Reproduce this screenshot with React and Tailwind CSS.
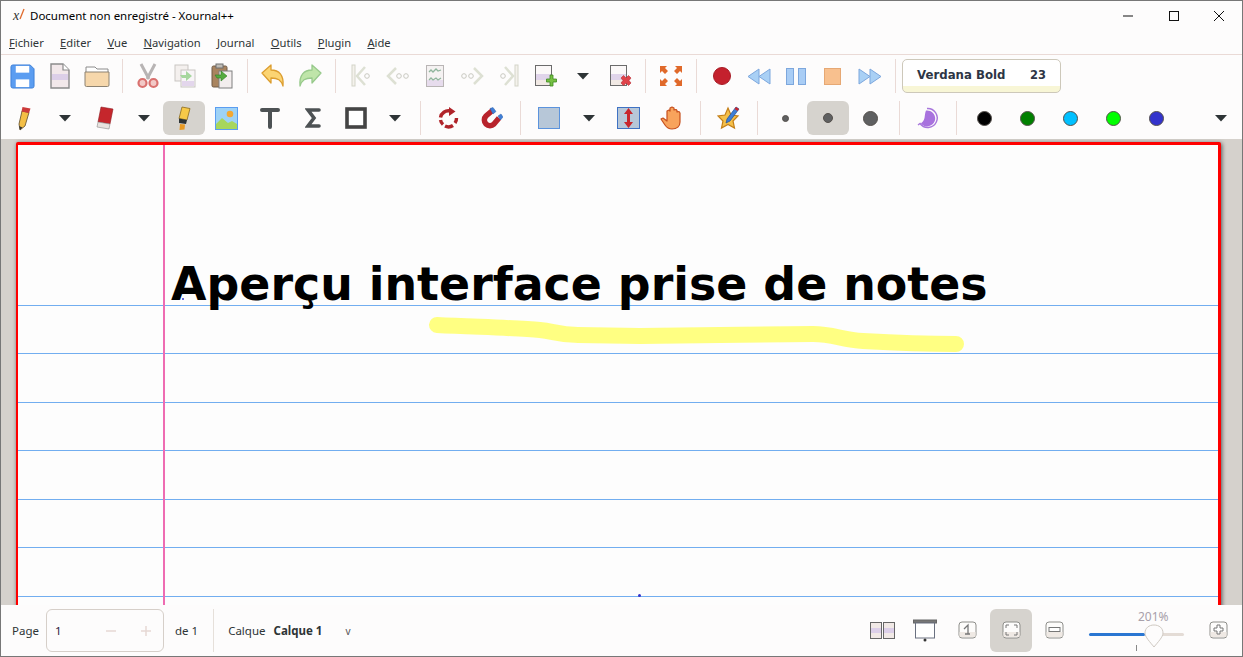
import React from 'react';

const Arrow = () => (
  <svg width="14" height="8" viewBox="0 0 14 8"><path d="M1 1h12L7 7.5z" fill="#2e3436" /></svg>
);

const Save = () => (
  <svg width="25" height="25" viewBox="0 0 26 26">
    <path d="M3 1h18l4 4v18a2 2 0 0 1-2 2H3a2 2 0 0 1-2-2V3a2 2 0 0 1 2-2z" fill="#5b9df1" stroke="#3d7fd6" />
    <rect x="6" y="2" width="14" height="7" fill="#fff" />
    <rect x="6" y="16" width="14" height="8" fill="#fff" />
  </svg>
);

const NewDoc = () => (
  <svg width="20" height="26" viewBox="0 0 20 26">
    <path d="M1 1h12l6 6v18H1z" fill="#f2e8ea" stroke="#8a8a8a" strokeWidth="1.4" />
    <rect x="2" y="11" width="16" height="6" fill="#dccfe8" />
    <path d="M13 1v6h6" fill="#fff" stroke="#8a8a8a" strokeWidth="1.2" />
  </svg>
);

const Folder = () => (
  <svg width="26" height="24" viewBox="0 0 26 24">
    <path d="M2 5V3h9l2 2h11v4H2z" fill="#fff" stroke="#8c8c8c" />
    <path d="M1 8h24v13a1.500 1.500 0 0 1-1.500 1.500h-21A1.500 1.500 0 0 1 1 21z" fill="#f6d7ab" stroke="#8c8272" />
  </svg>
);

const Scissors = () => (
  <svg width="22" height="26" viewBox="0 0 22 26" fill="none">
    <path d="M4 1l8 15M18 1l-8 15" stroke="#b8b4b4" strokeWidth="3" />
    <circle cx="5.500" cy="20" r="4" stroke="#d9716f" strokeWidth="2.200" fill="#f2c9c7" />
    <circle cx="16.500" cy="20" r="4" stroke="#d9716f" strokeWidth="2.200" fill="#f2c9c7" />
  </svg>
);

const Copy = () => (
  <svg width="22" height="24" viewBox="0 0 22 24">
    <rect x="1" y="1" width="13" height="16" fill="#f4f0ee" stroke="#c9c5c2" />
    <rect x="7" y="6" width="14" height="17" fill="#f8f5f7" stroke="#c9c5c2" />
    <rect x="8" y="17" width="12" height="5" fill="#e3d6ec" />
    <path d="M6 11h6V7l6 5-6 5v-3H8z" fill="#a7d79e" />
  </svg>
);

const Paste = () => (
  <svg width="22" height="26" viewBox="0 0 22 26">
    <rect x="1" y="3" width="15" height="21" rx="1.500" fill="#a9845f" stroke="#6f5a46" />
    <rect x="5" y="1" width="7" height="4" fill="#bfbcb6" stroke="#6f6f6f" />
    <rect x="8" y="8" width="13" height="17" fill="#f3eeee" stroke="#7f7f7f" />
    <path d="M4 12h6V8l6 5-6 5v-3H6z" fill="#54ab3f" stroke="#2e7d24" strokeWidth=".6" />
  </svg>
);

const Undo = () => (
  <svg width="24" height="24" viewBox="0 0 24 24">
    <path d="M1 9l9-8v5c8 0 13 5 12 16-2-6-5-8-12-8v5z" fill="#fbd473" stroke="#dc9d2f" strokeWidth="1.300" strokeLinejoin="round" />
  </svg>
);

const Redo = () => (
  <svg width="24" height="24" viewBox="0 0 24 24">
    <path d="M23 9l-9-8v5C6 6 1 11 2 22c2-6 5-8 12-8v5z" fill="#bfe5a9" stroke="#97c98b" strokeWidth="1.300" strokeLinejoin="round" />
  </svg>
);

const NavFirst = () => (
  <svg width="22" height="24" viewBox="0 0 22 24" fill="none">
    <rect x="2" y="1" width="3" height="21" fill="#f4f2ec" stroke="#d4d4c8" />
    <path d="M15 3l-8 9 8 9" stroke="#dde0d3" strokeWidth="2.500" />
    <circle cx="17" cy="12" r="2.300" stroke="#c9c9c1" />
  </svg>
);

const NavPrev = () => (
  <svg width="24" height="20" viewBox="0 0 24 20" fill="none">
    <path d="M10 2l-8 8 8 8" stroke="#dde0d3" strokeWidth="2.500" />
    <circle cx="13" cy="10" r="2.300" stroke="#c9c9c1" />
    <circle cx="20" cy="10" r="2.300" stroke="#c9c9c1" />
  </svg>
);

const NavNext = () => (
  <svg width="24" height="20" viewBox="0 0 24 20" fill="none">
    <path d="M14 2l8 8-8 8" stroke="#dde0d3" strokeWidth="2.500" />
    <circle cx="4" cy="10" r="2.300" stroke="#c9c9c1" />
    <circle cx="11" cy="10" r="2.300" stroke="#c9c9c1" />
  </svg>
);

const NavLast = () => (
  <svg width="22" height="24" viewBox="0 0 22 24" fill="none">
    <rect x="17" y="1" width="3" height="21" fill="#f4f2ec" stroke="#d4d4c8" />
    <path d="M7 3l8 9-8 9" stroke="#dde0d3" strokeWidth="2.500" />
    <circle cx="5" cy="12" r="2.300" stroke="#c9c9c1" />
  </svg>
);

const Goto = () => (
  <svg width="18" height="22" viewBox="0 0 18 22" fill="none">
    <rect x=".500" y=".500" width="17" height="21" fill="#f5f2f2" stroke="#b9b5b5" />
    <rect x="1" y="15" width="16" height="6" fill="#e7dced" />
    <path d="M3 7l2-2 2 2 3-3 2 2 3-1M3 15l2-2 2 2 3-2 2 2 3-2" stroke="#8fb59c" strokeWidth="1.300" />
  </svg>
);

const PageAdd = () => (
  <svg width="22" height="23" viewBox="0 0 22 23">
    <rect x=".500" y=".500" width="16" height="20" fill="#fbf8f8" stroke="#6b6b6b" />
    <rect x="1" y="9" width="15" height="6" fill="#e0d4ea" />
    <rect x="1" y="15" width="15" height="5" fill="#f1e9e4" />
    <path d="M15 10h3v4h3.500v3H18v4h-3v-4h-3.500v-3H15z" fill="#76c043" stroke="#3e8a22" strokeWidth=".8" />
  </svg>
);

const PageDel = () => (
  <svg width="22" height="23" viewBox="0 0 22 23">
    <rect x=".500" y=".500" width="16" height="20" fill="#fbf8f8" stroke="#6b6b6b" />
    <rect x="1" y="9" width="15" height="6" fill="#e0d4ea" />
    <rect x="1" y="15" width="15" height="5" fill="#f1e9e4" />
    <path d="M11 13l2.500-2.500L16 13l2.500-2.500L21 13l-2 2.500 2 2.500-2.500 2.500L16 18l-2.500 2.500L11 18l2-2.500z" fill="#e0434a" stroke="#b82a30" strokeWidth=".6" />
  </svg>
);

const Fullscreen = () => (
  <svg width="22" height="20" viewBox="0 0 22 20" fill="#e0692a">
    <path d="M0 0h7L5 2l3 3-3 3-3-3-2 2zM22 0h-7l2 2-3 3 3 3 3-3 2 2zM0 20h7l-2-2 3-3-3-3-3 3-2-2zM22 20h-7l2-2-3-3 3-3 3 3 2-2z" />
  </svg>
);

const Dot = ({ size, fill, stroke = '#55504c' }) => (
  <span className="rounded-full border" style={{ width: size, height: size, background: fill, borderColor: stroke }} />
);

const Rewind = () => (
  <svg width="24" height="17" viewBox="0 0 24 17"><path d="M12 1L1 8.500 12 16zM23 1L12 8.500 23 16z" fill="#a9d0f5" stroke="#7da7dd" /></svg>
);
const Forward = () => (
  <svg width="24" height="17" viewBox="0 0 24 17"><path d="M1 1l11 7.500L1 16zM12 1l11 7.500L12 16z" fill="#a9d0f5" stroke="#7da7dd" /></svg>
);
const Pause = () => (
  <svg width="20" height="17" viewBox="0 0 20 17" fill="#a9cdf5" stroke="#7da7dd"><rect x=".500" y=".500" width="7" height="16" /><rect x="12.500" y=".500" width="7" height="16" /></svg>
);
const Stop = () => (
  <svg width="17" height="17" viewBox="0 0 17 17"><rect x=".500" y=".500" width="16" height="16" fill="#f8c08e" stroke="#e6a874" /></svg>
);

const Pencil = () => (
  <svg width="16" height="25" viewBox="0 0 16 25">
    <path d="M5 5l7 1.500L8 20l-5 4-1-6z" fill="#f4bf46" stroke="#5c4a2a" strokeWidth=".8" />
    <path d="M5.500 1l8 1.500L12 7 4.500 5.500z" fill="#cc3a3a" />
    <path d="M3 24l-1-4 3.500 1.500z" fill="#333" />
  </svg>
);

const Eraser = () => (
  <svg width="18" height="24" viewBox="0 0 18 24">
    <path d="M5 1l12 2-3 15-12-2z" fill="#c5262c" stroke="#8f1d22" strokeWidth=".6" />
    <path d="M2 16l12 2-1 5-12-2z" fill="#e8e3df" stroke="#8c8c8c" strokeWidth=".6" />
  </svg>
);

const Highlighter = () => (
  <svg width="16" height="26" viewBox="0 0 16 26">
    <path d="M6 2l8 1.500L11 15l-8-1.500z" fill="#f7c948" stroke="#8a6a1d" strokeWidth=".8" />
    <path d="M3 13.500l8 1.500-1 4-7-1z" fill="#2e3436" />
    <path d="M4 19l5 .500-.500 5L3.500 25z" fill="#e89a24" />
  </svg>
);

const ImageIcon = () => (
  <svg width="23" height="23" viewBox="0 0 23 23">
    <rect x=".500" y=".500" width="22" height="22" fill="#9ed2f6" stroke="#5b9df1" />
    <circle cx="15" cy="7" r="3.300" fill="#f3a833" />
    <path d="M1 17l6-6 6 5 4-2 5 3v5H1z" fill="#a7d65c" />
  </svg>
);

const TextIcon = () => (
  <svg width="20" height="22" viewBox="0 0 20 22" fill="none">
    <path d="M2 3h16M10 3v17" stroke="#4d5254" strokeWidth="4" strokeLinecap="round" />
  </svg>
);

const SigmaIcon = () => (
  <svg width="16" height="22" viewBox="0 0 16 22" fill="none">
    <path d="M14 3H3l6 8-6 8h11" stroke="#4d5254" strokeWidth="3.600" strokeLinecap="round" />
  </svg>
);

const RectIcon = () => (
  <svg width="22" height="22" viewBox="0 0 22 22"><rect x="2" y="2" width="18" height="18" fill="#fff" stroke="#444" strokeWidth="3.600" /></svg>
);

const Rotate = () => (
  <svg width="21" height="22" viewBox="0 0 21 22" fill="none">
    <path d="M2.500 10.500a8 8 0 0 1 9.500-6.500" stroke="#b0242a" strokeWidth="3.400" />
    <path d="M11 0l6.500 4.500L11 9z" fill="#b0242a" />
    <path d="M18.500 11a8 8 0 0 1-1.500 5" stroke="#b0242a" strokeWidth="3.400" />
    <path d="M15 18.500a8 8 0 0 1-8 .500" stroke="#b0242a" strokeWidth="3.400" />
    <path d="M5 17.500a8 8 0 0 1-2.500-4.500" stroke="#b0242a" strokeWidth="3.400" />
  </svg>
);

const Magnet = () => (
  <svg width="22" height="22" viewBox="0 0 22 22" fill="none">
    <path d="M12 3L5 9a5 5 0 0 0 8 8l5-6" stroke="#b8232c" strokeWidth="5.500" />
    <path d="M9 1.500l3-1 3 4-3 2.500zM17 9l3-2 2 3-2.500 3z" fill="#3f7fd6" stroke="#2f62ae" strokeWidth=".5" />
  </svg>
);

const PageBg = () => (
  <svg width="22" height="22" viewBox="0 0 22 22"><rect x=".500" y=".500" width="21" height="21" fill="#b7c7d8" stroke="#5b93dd" /></svg>
);

const VSpace = () => (
  <svg width="23" height="22" viewBox="0 0 23 22">
    <rect x=".500" y=".500" width="22" height="21" fill="#b7c7d8" stroke="#3f72c4" />
    <path d="M11.500 1L16 7h-3v8h3l-4.500 6L7 15h3V7H7z" fill="#c8262c" />
  </svg>
);

const Hand = () => (
  <svg width="24" height="25" viewBox="0 0 24 25">
    <path d="M1 13l2-1 4 3V5l2-1 1 1V2l2-1 2 1v2l2-.500 1 1V6l2-.500 1 1.500v9c0 4-3 7-8 7-3 0-5-1-7-4z" fill="#f8a35c" stroke="#c64f1d" strokeWidth="1.200" strokeLinejoin="round" />
  </svg>
);

const StarPen = () => (
  <svg width="24" height="24" viewBox="0 0 24 24">
    <path d="M11 2l3 7 7 1-5 5 1.500 7L11 18.500 4.500 22 6 15 1 10l7-1z" fill="#f5c04a" stroke="#c47f18" strokeWidth="1.200" />
    <path d="M19 1l3 2-9 12-4 2 1-4z" fill="#3f7fd6" stroke="#1f4f9a" strokeWidth=".7" />
    <path d="M19 1l3 2-1.500 2-3-2z" fill="#c8262c" />
  </svg>
);

const Crescent = () => (
  <svg width="22" height="22" viewBox="0 0 22 22" fill="none">
    <path d="M10 1.500A9.500 9.500 0 1 1 3 16.500L1 18" stroke="#a877dc" strokeWidth="1.400" />
    <path d="M9 3.500A8 8 0 1 1 4 16.500L2 17.500C5 16 7 14 7.500 11 8 8 8 6 9 3.500z" fill="#a872de" />
  </svg>
);

const Logo = () => (
  <span className="w-[18px] flex items-center font-['Liberation_Serif',serif] italic text-[14px] leading-none text-[#333]">
    <span className="ml-[1px]">x</span>
    <svg width="6" height="12" viewBox="0 0 6 12" fill="none" className="-mt-[3px]"><path d="M1 11l4-10" stroke="#e0692a" strokeWidth="1.300" /></svg>
  </span>
);

const Tool = ({ children, className = 'w-[37px]', active }) => (
  <div className={`${className} h-[34px] shrink-0 flex items-center justify-center rounded-md ${active ? 'bg-[#d6d3ce]' : ''}`}>
    {children}
  </div>
);

const Sep = ({ className = 'w-[14px]' }) => (
  <div className={`${className} h-[34px] shrink-0 flex justify-center`}>
    <div className="w-px h-full bg-[#eadad6]" />
  </div>
);

const ZoomBtn = ({ children }) => (
  <svg width="19" height="19" viewBox="0 0 19 19" fill="none">
    <rect x="1" y="1" width="17" height="16" rx="3" fill="#fdfcfb" stroke="#8e8e8a" />
    <rect x="1.500" y="11" width="16" height="5" fill="#efe9e4" />
    {children}
  </svg>
);

const menus = [
  ['F', 'ichier'],
  ['E', 'diter'],
  ['V', 'ue'],
  ['N', 'avigation'],
  ['J', 'ournal'],
  ['O', 'utils'],
  ['P', 'lugin'],
  ['A', 'ide'],
];

const ruleHeights = ['h-[161px]', 'h-[48px]', 'h-[49px]', 'h-[48px]', 'h-[49px]', 'h-[48px]', 'h-[49px]'];

export default function App() {
  return (
    <div className="w-[1243px] h-[657px] flex flex-col overflow-hidden border border-[#777] bg-[#fdfcfc] text-[#2e3436] font-['Noto_Sans',sans-serif]">
      <div className="h-[31px] shrink-0 flex items-center pl-[11px] pb-[2px] text-[11.500px] text-black">
        <Logo />
        <span>Document non enregistré - Xournal++</span>
        <div className="ml-auto flex items-center">
          <svg width="12" height="12" viewBox="0 0 12 12" className="mr-[34px]"><path d="M1 6h10" stroke="#111" /></svg>
          <svg width="12" height="12" viewBox="0 0 12 12" className="mr-[33px]"><rect x="1.500" y="1.500" width="9" height="9" fill="none" stroke="#111" /></svg>
          <svg width="12" height="12" viewBox="0 0 12 12" className="mr-[17px]"><path d="M1 1l10 10M11 1L1 11" stroke="#111" /></svg>
        </div>
      </div>

      <div className="h-[23px] shrink-0 flex items-center gap-[16.300px] pl-[8px] pt-[1px] text-[11.200px] border-b border-[#eadad6]">
        {menus.map(([k, rest]) => (
          <span key={k}><u>{k}</u>{rest}</span>
        ))}
      </div>

      <div className="h-[42px] shrink-0 flex items-center pl-[3px]">
        <Tool><Save /></Tool>
        <Tool><NewDoc /></Tool>
        <Tool><Folder /></Tool>
        <Sep />
        <Tool><Scissors /></Tool>
        <Tool><Copy /></Tool>
        <Tool><Paste /></Tool>
        <Sep />
        <Tool><Undo /></Tool>
        <Tool><Redo /></Tool>
        <Sep />
        <Tool><NavFirst /></Tool>
        <Tool><NavPrev /></Tool>
        <Tool><Goto /></Tool>
        <Tool><NavNext /></Tool>
        <Tool><NavLast /></Tool>
        <Tool><PageAdd /></Tool>
        <Tool><Arrow /></Tool>
        <Tool className="w-[37px] ml-px"><PageDel /></Tool>
        <Sep className="w-[13px]" />
        <Tool><Fullscreen /></Tool>
        <Sep />
        <Tool><Dot size={18} fill="#c4212d" stroke="#a81c26" /></Tool>
        <Tool><Rewind /></Tool>
        <Tool><Pause /></Tool>
        <Tool><Stop /></Tool>
        <Tool><Forward /></Tool>
        <Sep />
        <div className="w-[159px] h-[34px] shrink-0 rounded-[5px] border border-[#cdc8ba] bg-[linear-gradient(#fff_26px,#f8f6d6_26px)] flex items-center pl-[14px] pr-[14px] justify-between font-['DejaVu_Sans',sans-serif] font-bold text-[#2d3545]">
          <span className="text-[11.750px]">Verdana Bold</span>
          <span className="text-[11.500px]">23</span>
        </div>
      </div>

      <div className="h-[42px] shrink-0 flex items-center pl-[3px]">
        <Tool className="w-[41px]"><Pencil /></Tool>
        <Tool className="w-[40px]"><Arrow /></Tool>
        <Tool className="w-[39px]"><Eraser /></Tool>
        <Tool className="w-[39px]"><Arrow /></Tool>
        <Tool className="w-[42px]" active><Highlighter /></Tool>
        <Tool className="w-[43px]"><ImageIcon /></Tool>
        <Tool className="w-[43px]"><TextIcon /></Tool>
        <Tool className="w-[43px]"><SigmaIcon /></Tool>
        <Tool className="w-[43px]"><RectIcon /></Tool>
        <Tool className="w-[36px]"><Arrow /></Tool>
        <Sep />
        <Tool className="w-[43px]"><Rotate /></Tool>
        <Tool className="w-[43px]"><Magnet /></Tool>
        <Sep />
        <Tool className="w-[43px]"><PageBg /></Tool>
        <Tool className="w-[37px]"><Arrow /></Tool>
        <Tool className="w-[43px]"><VSpace /></Tool>
        <Tool className="w-[43px]"><Hand /></Tool>
        <Sep />
        <Tool className="w-[43px]"><StarPen /></Tool>
        <Sep />
        <Tool className="w-[43px]"><Dot size={7} fill="#5f6061" /></Tool>
        <Tool className="w-[42px]" active><Dot size={10} fill="#5f6061" /></Tool>
        <Tool className="w-[43px]"><Dot size={15} fill="#5f6061" /></Tool>
        <Sep />
        <Tool className="w-[43px]"><Crescent /></Tool>
        <Sep />
        <Tool className="w-[43px]"><Dot size={15} fill="#000000" /></Tool>
        <Tool className="w-[43px]"><Dot size={15} fill="#008000" /></Tool>
        <Tool className="w-[43px]"><Dot size={15} fill="#00c0ff" /></Tool>
        <Tool className="w-[43px]"><Dot size={15} fill="#00ff00" /></Tool>
        <Tool className="w-[43px]"><Dot size={15} fill="#3333cc" /></Tool>
        <div className="ml-auto mr-[14px]"><Arrow /></div>
      </div>

      <div className="relative flex-1 min-h-0 overflow-hidden bg-[#d5d1cc] pt-[3px] pl-[15px]">
        <div className="relative w-[1205px] h-[620px] bg-[#fdfdfd] border-2 border-t-[3px] border-r-[3px] border-[#ff0000] rounded-[2px] shadow-[1px_1px_4px_#555]">
          {ruleHeights.map((h, i) => (
            <div key={i} className={`${h} border-b border-[#72aef0]`} />
          ))}
          <div className="absolute z-10 top-0 bottom-0 left-[145px] w-[2px] bg-[#ee6cb2]" />
          <svg width="560" height="50" viewBox="0 0 560 50" fill="none" className="absolute left-[400px] top-[164px]">
            <path d="M19 16C60 18 100 19 122 21 135 22 140 26 160 26L222 27 302 26 395 25C415 25 425 31 445 32 480 34 510 35 538 35" stroke="#ffff82" strokeWidth="16" strokeLinecap="round" strokeLinejoin="round" />
          </svg>
          <span className="absolute left-[153px] top-[111px] text-[45.850px] leading-[56px] font-bold text-black whitespace-nowrap font-['DejaVu_Sans',sans-serif]">
            Aperçu interface prise de notes
          </span>
          <div className="absolute left-[164px] top-[153px] w-[2px] h-[2px] rounded-full bg-[#3333cc]" />
          <div className="absolute left-[620px] top-[449px] w-[3px] h-[3px] rounded-full bg-[#3333cc]" />
        </div>
      </div>

      <div className="h-[51px] shrink-0 flex items-center pl-[11px] text-[11.500px]">
        <span className="w-[34px]">Page</span>
        <div className="w-[118px] h-[43px] flex items-center rounded-md border border-[#d6cfc9] pl-[8px] text-[#2c1a3a]">
          <span className="w-[6px]">1</span>
          <svg width="10" height="10" viewBox="0 0 10 10" className="ml-[45px]"><path d="M0 5h10" stroke="#e6d8d4" strokeWidth="1.500" /></svg>
          <svg width="10" height="10" viewBox="0 0 10 10" className="ml-[25px]"><path d="M0 5h10M5 0v10" stroke="#e6d8d4" strokeWidth="1.500" /></svg>
        </div>
        <span className="ml-[11px]">de 1</span>
        <div className="ml-[15px] w-px h-[43px] bg-[#e6e0da]" />
        <span className="ml-[14px]">Calque</span>
        <span className="ml-[8px] font-bold">Calque 1</span>
        <span className="ml-[23px] mt-[2px] text-[10px] text-[#555]">v</span>

        <div className="ml-auto flex items-center pr-[14px]">
          <svg width="25" height="17" viewBox="0 0 25 17" className="mr-[18px]">
            <rect x=".500" y=".500" width="11" height="16" fill="#f1e9e6" stroke="#666" />
            <rect x="1" y="6" width="10" height="5" fill="#dccfe8" />
            <rect x="13.500" y=".500" width="11" height="16" fill="#f1e9e6" stroke="#666" />
            <rect x="14" y="6" width="10" height="5" fill="#dccfe8" />
          </svg>
          <svg width="24" height="23" viewBox="0 0 24 23" className="mr-[21px]">
            <rect x=".500" y="1" width="23" height="3" fill="#777" stroke="#666" />
            <rect x="2.500" y="4" width="19" height="15" fill="#fff" stroke="#6a7080" />
            <circle cx="12" cy="21" r="1.500" fill="#333" />
          </svg>
          <div className="mr-[13px]">
            <ZoomBtn>
              <path d="M6 8l4-4v9M7 13h5" stroke="#777" strokeWidth="1.300" />
            </ZoomBtn>
          </div>
          <div className="w-[42px] h-[43px] flex items-center justify-center rounded-md bg-[#d6d3ce] mr-[13px]">
            <ZoomBtn>
              <path d="M4 7V4h3M12 4h3v3M15 11v3h-3M7 14H4v-3" stroke="#777" />
            </ZoomBtn>
          </div>
          <div className="mr-[25px]">
            <ZoomBtn>
              <rect x="4" y="6.500" width="11" height="4" fill="#fff" stroke="#777" />
            </ZoomBtn>
          </div>
          <div className="relative w-[95px] h-[43px] mr-[25px]">
            <span className="absolute left-[49px] top-[-1px] text-[12px] text-[#a8a0aa]">201%</span>
            <div className="absolute left-0 top-[24px] w-[56px] h-[3px] rounded-full bg-[#2a76d2]" />
            <div className="absolute left-[56px] top-[24px] w-[39px] h-[3px] rounded-full bg-[#e4dcd6]" />
            <div className="absolute left-[47px] top-[36px] w-px h-[6px] bg-[#888]" />
            <svg width="20" height="25" viewBox="0 0 20 25" className="absolute left-[55px] top-[15px]">
              <path d="M10 1c5 0 9 3 9 8 0 4-5 9-9 14C6 18 1 13 1 9c0-5 4-8 9-8z" fill="#fdfcfc" stroke="#cfc9c2" />
            </svg>
          </div>
          <ZoomBtn>
            <path d="M8 4h3v3h3v3h-3v3H8v-3H5V7h3z" fill="#fff" stroke="#777" />
          </ZoomBtn>
        </div>
      </div>
    </div>
  );
}
